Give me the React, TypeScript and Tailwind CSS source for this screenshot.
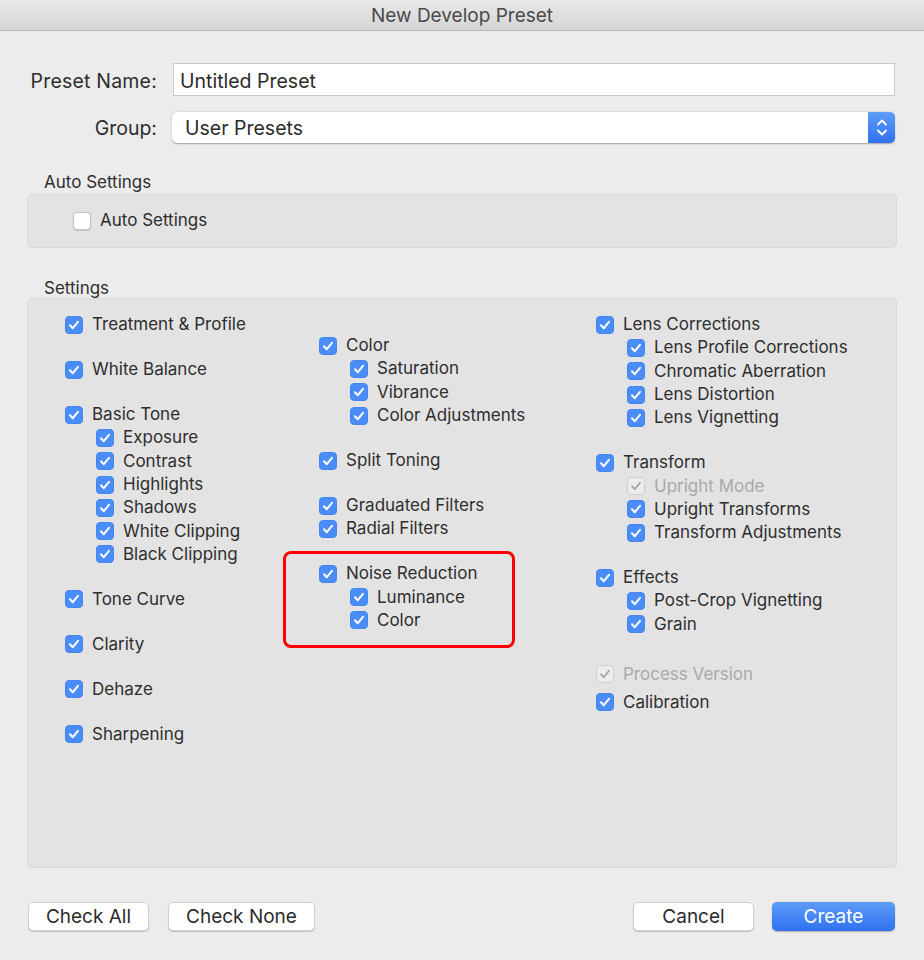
import React from "react";

type Item = { label: string; sub?: boolean; disabled?: boolean };

function Check({ checked = true, disabled = false }: { checked?: boolean; disabled?: boolean }) {
  if (!checked) {
    return <span className="w-[18px] h-[18px] rounded-[4px] bg-white border border-[#c4c4c4] shadow-[0_0.5px_1px_rgba(0,0,0,0.15)] shrink-0" />;
  }
  if (disabled) {
    return (
      <span className="w-[18px] h-[18px] rounded-[4px] bg-[#ececec] border border-[#cfcfcf] flex items-center justify-center shrink-0">
        <svg width="14" height="14" viewBox="0 0 14 14">
          <path d="M3 7.3 L5.8 10.2 L11 3.8" fill="none" stroke="#a4a4a4" strokeWidth="1.8" strokeLinecap="round" strokeLinejoin="round" />
        </svg>
      </span>
    );
  }
  return (
    <span className="w-[18px] h-[18px] rounded-[4px] bg-[#4b8df8] border border-[#4486f0] flex items-center justify-center shrink-0">
      <svg width="14" height="14" viewBox="0 0 14 14">
        <path d="M3 7.3 L5.8 10.2 L11 3.8" fill="none" stroke="#ffffff" strokeWidth="2" strokeLinecap="round" strokeLinejoin="round" />
      </svg>
    </span>
  );
}

function Row({ label, sub, disabled }: Item) {
  return (
    <div className={`flex items-center h-[23.3px] gap-[9px] ${sub ? "pl-[31px]" : ""}`}>
      <Check disabled={disabled} />
      <span className={`text-[17px] leading-none whitespace-nowrap ${disabled ? "text-[#a9a9a9]" : "text-[#2e2e2e]"}`}>{label}</span>
    </div>
  );
}

function Group({ items }: { items: Item[] }) {
  return (
    <div className="flex flex-col">
      {items.map((it) => (
        <Row key={it.label} {...it} />
      ))}
    </div>
  );
}

const col1: Item[][] = [
  [{ label: "Treatment & Profile" }],
  [{ label: "White Balance" }],
  [
    { label: "Basic Tone" },
    { label: "Exposure", sub: true },
    { label: "Contrast", sub: true },
    { label: "Highlights", sub: true },
    { label: "Shadows", sub: true },
    { label: "White Clipping", sub: true },
    { label: "Black Clipping", sub: true },
  ],
  [{ label: "Tone Curve" }],
  [{ label: "Clarity" }],
  [{ label: "Dehaze" }],
  [{ label: "Sharpening" }],
];

const col3: Item[][] = [
  [
    { label: "Lens Corrections" },
    { label: "Lens Profile Corrections", sub: true },
    { label: "Chromatic Aberration", sub: true },
    { label: "Lens Distortion", sub: true },
    { label: "Lens Vignetting", sub: true },
  ],
  [
    { label: "Transform" },
    { label: "Upright Mode", sub: true, disabled: true },
    { label: "Upright Transforms", sub: true },
    { label: "Transform Adjustments", sub: true },
  ],
  [
    { label: "Effects" },
    { label: "Post-Crop Vignetting", sub: true },
    { label: "Grain", sub: true },
  ],
];

function Button({ children, primary, className = "" }: { children: React.ReactNode; primary?: boolean; className?: string }) {
  return (
    <button
      className={`h-[29px] rounded-[5px] text-[19px] leading-none flex items-center justify-center ${
        primary
          ? "bg-gradient-to-b from-[#5f9cf7] to-[#2f70f1] text-white shadow-[0_0.5px_1.5px_rgba(0,0,0,0.25)]"
          : "bg-white text-[#2b2b2b] border border-[#d0d0d0] shadow-[0_1px_1px_rgba(0,0,0,0.18)]"
      } ${className}`}
    >
      {children}
    </button>
  );
}

export default function App() {
  return (
    <div className="w-[924px] h-[960px] bg-[#ececec] flex flex-col font-['Inter','Liberation_Sans',sans-serif] overflow-hidden">
      {/* title bar */}
      <div className="h-[31px] shrink-0 bg-gradient-to-b from-[#e9e9e9] to-[#d5d5d5] border-b border-[#b9b9b9] flex items-center justify-center">
        <span className="text-[19px] text-[#4a4a4a] leading-none">New Develop Preset</span>
      </div>

      {/* name + group */}
      <div className="flex flex-col gap-[16px] mt-[32px]">
        <div className="flex items-center h-[33px]">
          <span className="w-[157px] text-right text-[19.5px] leading-none tracking-[0.2px] text-[#2e2e2e] pt-[4px]">Preset Name:</span>
          <div className="ml-[16px] w-[722px] h-[33px] bg-white border border-[#c9c9c9] flex items-center px-[6px] pt-[4px] text-[19.5px] leading-none text-[#2b2b2b]">
            Untitled Preset
          </div>
        </div>
        <div className="flex items-center h-[31px]">
          <span className="w-[157px] text-right text-[19.5px] leading-none text-[#2e2e2e] pt-[3px]">Group:</span>
          <div className="ml-[15px] w-[723px] h-[31px] bg-white rounded-[5px] shadow-[0_0.5px_1.5px_rgba(0,0,0,0.3)] flex items-center justify-between overflow-hidden">
            <span className="pl-[13px] pt-[3px] text-[19.5px] leading-none text-[#2b2b2b]">User Presets</span>
            <div className="w-[27px] h-full bg-gradient-to-b from-[#5f9cf7] to-[#2f70f1] flex flex-col items-center justify-center gap-[3px]">
              <svg width="12" height="7" viewBox="0 0 12 7">
                <path d="M2 5.5 L6 1.5 L10 5.5" fill="none" stroke="#fff" strokeWidth="1.8" strokeLinecap="round" strokeLinejoin="round" />
              </svg>
              <svg width="12" height="7" viewBox="0 0 12 7">
                <path d="M2 1.5 L6 5.5 L10 1.5" fill="none" stroke="#fff" strokeWidth="1.8" strokeLinecap="round" strokeLinejoin="round" />
              </svg>
            </div>
          </div>
        </div>
      </div>

      {/* auto settings */}
      <div className="mt-[28px] px-[27px] flex flex-col">
        <span className="pl-[17px] text-[17px] text-[#2e2e2e] leading-[22px]">Auto Settings</span>
        <div className="mt-[1px] h-[54px] bg-[#e3e3e3] border border-[#dadada] rounded-[5px] flex items-center pl-[45px] gap-[9px]">
          <Check checked={false} />
          <span className="text-[17px] text-[#2e2e2e]">Auto Settings</span>
        </div>
      </div>

      {/* settings */}
      <div className="mt-[29px] px-[27px] flex flex-col">
        <span className="pl-[17px] text-[17px] text-[#2e2e2e] leading-[22px]">Settings</span>
        <div className="mt-[-1px] h-[570px] bg-[#e3e3e3] border border-[#dadada] rounded-[5px] flex pl-[37px] pt-[14px]">
          <div className="w-[254px] flex flex-col gap-[21.7px]">
            {col1.map((g, i) => (
              <Group key={i} items={g} />
            ))}
          </div>

          <div className="w-[277px] flex flex-col gap-[21.7px] pt-[21px]">
            <Group
              items={[
                { label: "Color" },
                { label: "Saturation", sub: true },
                { label: "Vibrance", sub: true },
                { label: "Color Adjustments", sub: true },
              ]}
            />
            <Group items={[{ label: "Split Toning" }]} />
            <Group items={[{ label: "Graduated Filters" }, { label: "Radial Filters" }]} />
            <div className="relative">
              <div className="absolute left-[-36px] top-[-11px] w-[232px] h-[97px] border-[3.5px] border-[#ff0000] rounded-[8px]" />
              <Group
                items={[
                  { label: "Noise Reduction" },
                  { label: "Luminance", sub: true },
                  { label: "Color", sub: true },
                ]}
              />
            </div>
          </div>

          <div className="flex flex-col">
            <div className="flex flex-col gap-[21.7px]">
              {col3.map((g, i) => (
                <Group key={i} items={g} />
              ))}
            </div>
            <div className="mt-[26.7px]">
              <Row label="Process Version" disabled />
            </div>
            <div className="mt-[4.7px]">
              <Row label="Calibration" />
            </div>
          </div>
        </div>
      </div>

      {/* buttons */}
      <div className="mt-[34px] px-[28px] flex items-center">
        <Button className="w-[121px]">Check All</Button>
        <Button className="w-[147px] ml-[19px]">Check None</Button>
        <div className="flex-1" />
        <Button className="w-[121px]">Cancel</Button>
        <Button primary className="w-[123px] ml-[18px] mr-[1px]">Create</Button>
      </div>
    </div>
  );
}
